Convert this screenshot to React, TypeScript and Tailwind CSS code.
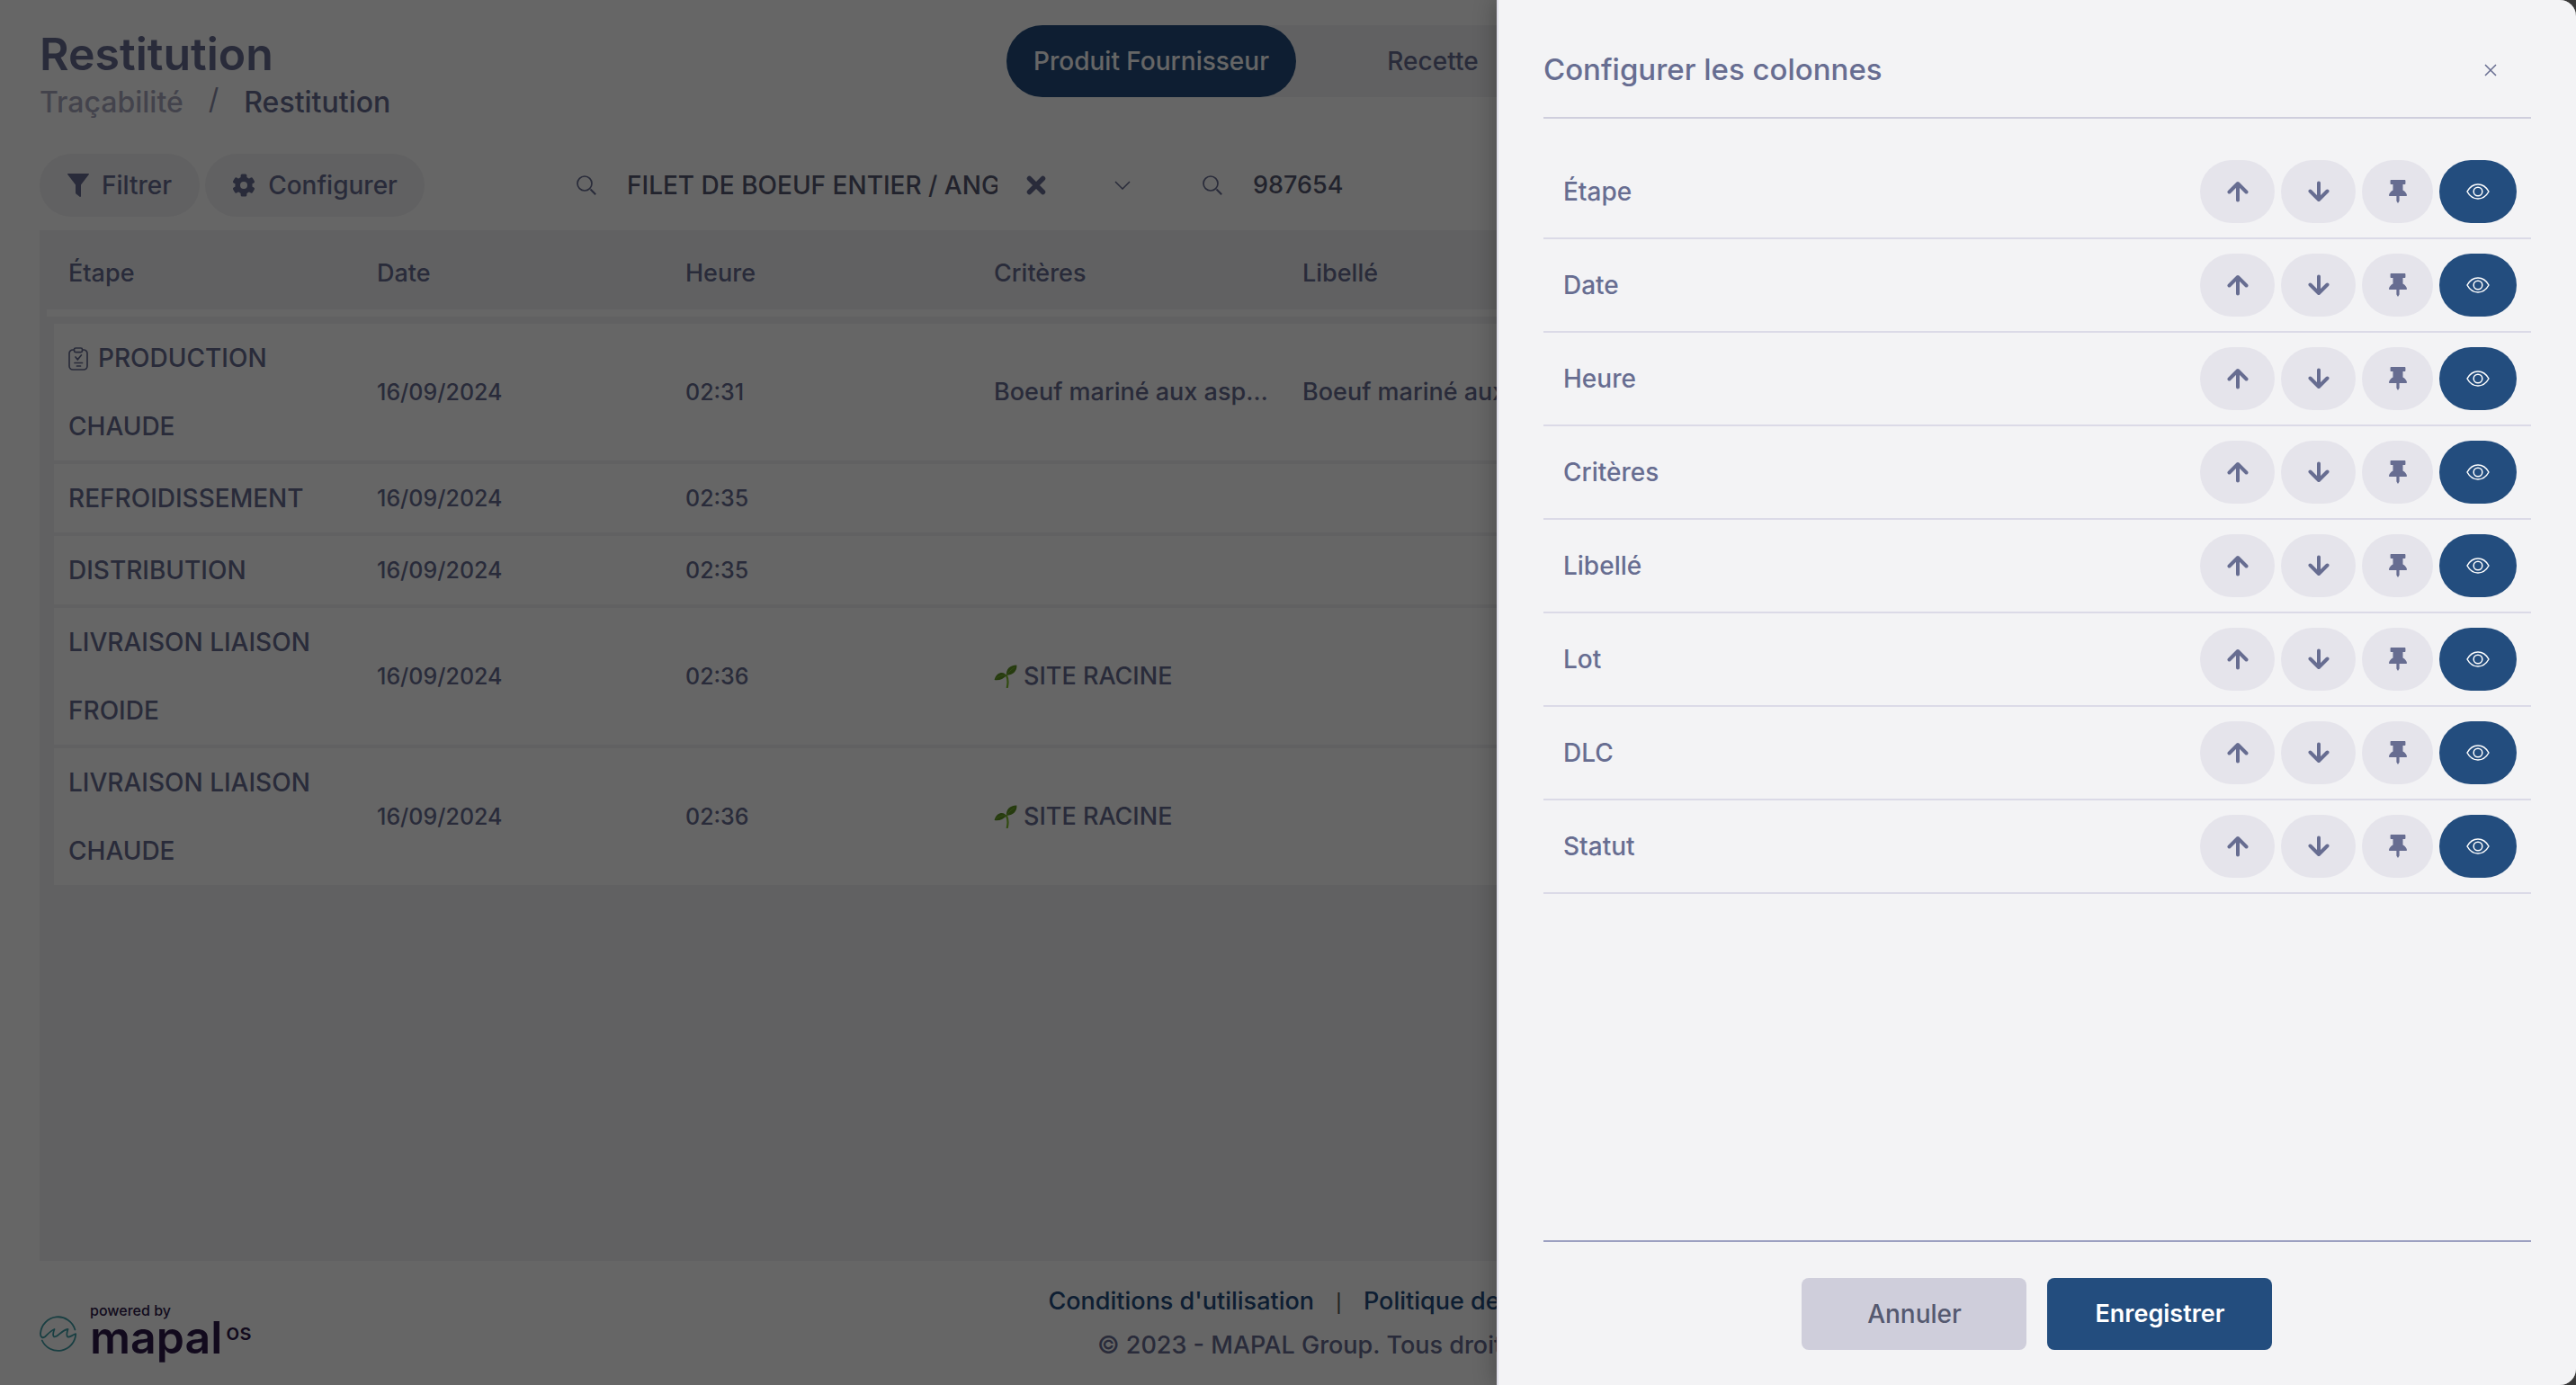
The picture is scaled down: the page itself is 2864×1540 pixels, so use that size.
import { useState } from 'react';
import type { ReactNode } from 'react';

interface TraceRow {
    etape: string;
    date: string;
    heure: string;
    critere?: string;
    libelle?: string;
    hasClipboard?: boolean;
    isSite?: boolean;
}

const COLUMNS = ['Étape', 'Date', 'Heure', 'Critères', 'Libellé', 'Lot', 'DLC', 'Statut'];

const ROWS: TraceRow[] = [
    {
        etape: 'PRODUCTION CHAUDE',
        date: '16/09/2024',
        heure: '02:31',
        critere: 'Boeuf mariné aux asperges',
        libelle: 'Boeuf mariné aux asperges',
        hasClipboard: true,
    },
    { etape: 'REFROIDISSEMENT', date: '16/09/2024', heure: '02:35' },
    { etape: 'DISTRIBUTION', date: '16/09/2024', heure: '02:35' },
    { etape: 'LIVRAISON LIAISON FROIDE', date: '16/09/2024', heure: '02:36', critere: 'SITE RACINE', isSite: true },
    { etape: 'LIVRAISON LIAISON CHAUDE', date: '16/09/2024', heure: '02:36', critere: 'SITE RACINE', isSite: true },
];

function FunnelIcon() {
    return (
        <svg viewBox="0 0 24 26" className="h-[26px] w-6" fill="currentColor" aria-hidden="true">
            <path d="M.6 0h22.800c.6 0 .8.6.4 1.100L15 12.400V25c0 .8-.8 1.200-1.400.7l-3.800-2.900a2 2 0 0 1-.8-1.600v-8.800L.2 1.100C-.2.6 0 0 .6 0z" />
        </svg>
    );
}

function GearIcon() {
    return (
        <svg viewBox="0 0 26 26" className="h-[26px] w-[26px]" aria-hidden="true">
            <g fill="currentColor">
                <rect x="9.6" y="0.4" width="6.8" height="25.2" rx="1.6" />
                <rect x="9.6" y="0.4" width="6.8" height="25.2" rx="1.6" transform="rotate(60 13 13)" />
                <rect x="9.6" y="0.4" width="6.8" height="25.2" rx="1.6" transform="rotate(120 13 13)" />
                <circle cx="13" cy="13" r="9.6" />
            </g>
            <circle cx="13" cy="13" r="4" fill="#f3f3f5" />
        </svg>
    );
}

function SearchIcon() {
    return (
        <svg viewBox="0 0 22 22" className="h-[22px] w-[22px] shrink-0" fill="none" stroke="currentColor" strokeWidth="1.7" aria-hidden="true">
            <circle cx="9" cy="9" r="8" />
            <path d="M15.5 15.5 21.2 21.2" strokeWidth="2" />
        </svg>
    );
}

function ClipboardIcon() {
    return (
        <svg viewBox="0 0 22 26" className="mr-[11px] inline-block h-[26px] w-[22px] align-[-4px]" fill="none" stroke="currentColor" strokeWidth="1.7" strokeLinecap="round" aria-hidden="true">
            <path d="M6 3H5A4 4 0 0 0 1 7v14a4 4 0 0 0 4 4h12a4 4 0 0 0 4-4V7a4 4 0 0 0-4-4h-1" />
            <rect x="6.5" y="1" width="9" height="4.6" rx="1.6" />
            <path d="m8 11 2.3 2.8 4.2-5M7 17.5h8.5M9.5 21h4" />
        </svg>
    );
}

function SeedlingIcon() {
    return (
        <svg viewBox="0 0 26 26" className="mr-[7px] inline-block h-[26px] w-[26px] align-[-4px]" aria-hidden="true">
            <path d="M14 12c1.6 3.5 2 8 .8 13.2" fill="none" stroke="#7fbf2e" strokeWidth="2.2" strokeLinecap="round" />
            <path d="M14 12c-.8-6.5 3.5-11.5 11.4-11.4C26 7.5 21 11.6 14 12z" fill="#5f9427" />
            <path d="M13.8 12.4C12.4 7.6 3 7.2.6 17c5.4 1.2 10-1.6 13.2-4.6z" fill="#5f9427" />
            <path d="M14 12c2-3.5 5-6.5 9-9" fill="none" stroke="#7fb536" strokeWidth="1" />
            <path d="M13.5 12C9.5 11.2 5.5 12.6 2.5 15.5" fill="none" stroke="#7fb536" strokeWidth="1" />
        </svg>
    );
}

function ArrowIcon({ down = false }: { down?: boolean }) {
    return (
        <svg viewBox="0 0 24 24" className={down ? 'h-6 w-6 rotate-180' : 'h-6 w-6'} fill="none" stroke="currentColor" strokeWidth="4" strokeLinecap="round" strokeLinejoin="round" aria-hidden="true">
            <path d="M12 21.5V3.5M2.5 12.5 12 3l9.5 9.5" />
        </svg>
    );
}

function PinIcon() {
    return (
        <svg viewBox="0 0 20 26" className="h-[26px] w-5" fill="currentColor" aria-hidden="true">
            <path d="M2.6 0h14.8c.6 0 1 .4 1 1v3c0 .6-.4 1-1 1h-1.9v6.4c2.4 1.2 4.2 3.3 4.5 5.7 0 .6-.4 1-1 1h-7.4v5.5L10 26l-1.6-2.4v-5.5H1c-.6 0-1-.4-1-1 .3-2.4 2.1-4.500 4.5-5.7V5H2.600c-.6 0-1-.4-1-1V1c0-.6.4-1 1-1z" />
        </svg>
    );
}

function EyeIcon() {
    return (
        <svg viewBox="0 0 26 18" className="h-[18px] w-[26px]" fill="none" stroke="currentColor" strokeWidth="1.5" strokeLinejoin="round" aria-hidden="true">
            <path d="M1 9C4 3.6 8 1 13 1s9 2.600 12 8c-3 5.400-7 8-12 8S4 14.400 1 9z" />
            <circle cx="13" cy="9" r="4.8" />
        </svg>
    );
}

function MapalMark() {
    return (
        <svg viewBox="0 0 42 42" className="h-[42px] w-[42px]" fill="none" stroke="#3f9da6" strokeWidth="1.8" strokeLinecap="round" strokeLinejoin="round" aria-hidden="true">
            <path d="M39.4 16.5A19.6 19.6 0 0 0 1 20.5c-.3 4.5 2.6 6 5.5 3.5 3-3 6-6.5 10-8-1.2 3-2.4 6.8-.4 8.3 4 1 7.5-7 15.4-8.3-1 3-2.2 7-.2 8.4 2.2 1 4-1.5 8.9-3.2A19.6 19.6 0 0 1 2.8 28.5" />
        </svg>
    );
}

interface RoundButtonProps {
    label: string;
    className: string;
    onClick?: () => void;
    children: ReactNode;
}

function RoundButton({ label, className, onClick, children }: RoundButtonProps) {
    return (
        <button type="button" aria-label={label} onClick={onClick} className={`flex h-[70px] items-center justify-center rounded-full ${className}`}>
            {children}
        </button>
    );
}

function PageHeader() {
    return (
        <header className="grid grid-cols-[1fr_auto_1fr] items-start px-11 pt-7">
            <div>
                <h1 className="text-[50px] font-semibold leading-[64px]">Restitution</h1>
                <nav aria-label="Fil d'Ariane" className="flex text-[32px] leading-[44px]">
                    <a href="#tracabilite" className="text-[#a9a9bf]">Traçabilité</a>
                    <span className="px-7 font-normal leading-9 text-[#8b8da9]">/</span>
                    <span>Restitution</span>
                </nav>
            </div>
            <div className="flex h-20 rounded-full bg-[#f3f3f5]">
                <button type="button" className="w-[322px] rounded-full bg-[#234d7e] text-white">Produit Fournisseur</button>
                <button type="button" className="w-[304px] rounded-full">Recette</button>
            </div>
        </header>
    );
}

function Toolbar() {
    return (
        <div className="mt-[35px] flex h-[70px] items-center px-11">
            <div className="flex w-[597px] shrink-0 gap-1.5">
                <button type="button" className="flex h-[70px] items-center gap-3.5 rounded-full bg-[#f3f3f5] px-[31px]">
                    <FunnelIcon />
                    Filtrer
                </button>
                <button type="button" className="flex h-[70px] items-center gap-3.5 rounded-full bg-[#f3f3f5] px-[30px]">
                    <GearIcon />
                    Configurer
                </button>
            </div>
            <div className="flex items-center">
                <SearchIcon />
                <input
                    type="text"
                    aria-label="Produit"
                    defaultValue="FILET DE BOEUF ENTIER / ANGUS"
                    className="ml-[34px] w-[412px] bg-transparent text-[28px] text-[#555970] outline-none"
                />
                <button type="button" aria-label="Effacer" className="ml-8">
                    <svg viewBox="0 0 22 22" className="h-[22px] w-[22px]" stroke="currentColor" strokeWidth="5.5" strokeLinecap="round" aria-hidden="true">
                        <path d="M3.5 3.5 18.5 18.5M18.5 3.5 3.5 18.5" />
                    </svg>
                </button>
                <button type="button" aria-label="Ouvrir la liste" className="ml-[76px]">
                    <svg viewBox="0 0 18 10" className="h-2.5 w-[18px]" fill="none" stroke="currentColor" strokeWidth="1.5" aria-hidden="true">
                        <path d="M1 1l8 8 8-8" />
                    </svg>
                </button>
            </div>
            <div className="ml-20 flex items-center">
                <SearchIcon />
                <input
                    type="text"
                    aria-label="Lot"
                    defaultValue="987654"
                    className="ml-[34px] w-[412px] bg-transparent text-[27px] text-[#555970] outline-none"
                />
            </div>
        </div>
    );
}

function TraceTable() {
    return (
        <div className="mx-11 mt-[15px] flex-1 bg-[#f3f3f5] px-4 pt-2">
            <table className="w-full table-fixed">
                <thead>
                    <tr className="h-20">
                        {COLUMNS.map((column) => (
                            <th key={column} scope="col" className="px-4 text-left text-[27px] font-medium">
                                {column}
                            </th>
                        ))}
                    </tr>
                </thead>
                <tbody>
                    <tr aria-hidden="true">
                        <td colSpan={COLUMNS.length} className="p-0">
                            <div className="-mx-2 mb-2 h-2 bg-white" />
                        </td>
                    </tr>
                    {ROWS.map((row) => (
                        <tr key={row.etape} className="border-b-4 border-[#f3f3f5] bg-white leading-[76px]">
                            <td className="px-4 py-0">
                                {row.hasClipboard && <ClipboardIcon />}
                                {row.etape}
                            </td>
                            <td className="px-4 py-0 text-[25px]">{row.date}</td>
                            <td className="px-4 py-0 text-[25px]">{row.heure}</td>
                            <td className="truncate px-4 py-0 text-[27px]">
                                {row.isSite && <SeedlingIcon />}
                                {row.critere}
                            </td>
                            <td className="truncate px-4 py-0 text-[27px]">{row.libelle}</td>
                            <td />
                            <td />
                            <td />
                        </tr>
                    ))}
                </tbody>
            </table>
        </div>
    );
}

function PageFooter() {
    return (
        <footer className="flex items-center px-11 py-5">
            <div className="flex w-40 shrink-0 items-center gap-3.5 pt-2 whitespace-nowrap text-[#2d1a4a]">
                <div className="shrink-0 pt-4">
                    <MapalMark />
                </div>
                <div>
                    <p className="text-[16px] leading-6">powered by</p>
                    <p className="flex items-start leading-9">
                        <span className="text-[50px] font-semibold">mapal</span>
                        <span className="pl-1 text-[25px] leading-6">os</span>
                    </p>
                </div>
            </div>
            <div className="flex-1 text-center text-[27px] leading-[49px]">
                <p>
                    <a href="#conditions" className="text-[#234d7e]">Conditions d'utilisation</a>
                    <span className="px-6 text-[20px] leading-none text-[#555555]">|</span>
                    <a href="#confidentialite" className="text-[#234d7e]">Politique de confidentialité</a>
                </p>
                <p>© 2023 - MAPAL Group. Tous droits réservés</p>
            </div>
        </footer>
    );
}

function ColumnsDrawer() {
    const [columns, setColumns] = useState(COLUMNS);

    const move = (index: number, delta: number) => {
        const target = index + delta;
        if (target < 0 || target >= columns.length) return;
        const next = [...columns];
        [next[index], next[target]] = [next[target], next[index]];
        setColumns(next);
    };

    return (
        <aside
            role="dialog"
            aria-label="Configurer les colonnes"
            className="absolute inset-y-0 right-0 flex w-[41.9%] flex-col border-l-2 border-[#dedde8] bg-[#f3f3f5] px-[50px] shadow-[0_0_24px_rgba(0,0,0,0.3)]"
        >
            <div className="flex h-[132px] items-center justify-between border-b-2 border-[#cfcedd] pt-[26px] pr-[38px]">
                <h2 className="text-[33px] font-medium">Configurer les colonnes</h2>
                <button type="button" aria-label="Fermer">
                    <svg viewBox="0 0 14 14" className="h-3.5 w-3.5" stroke="currentColor" strokeWidth="1.5" aria-hidden="true">
                        <path d="M1 1l12 12M13 1 1 13" />
                    </svg>
                </button>
            </div>
            <ul className="flex-1 pt-[30px]">
                {columns.map((column, index) => (
                    <li key={column} className="flex h-[104px] items-center justify-between border-b-2 border-[#dbdae7] pr-4 pl-[22px]">
                        <span>{column}</span>
                        <div className="flex gap-[7px]">
                            <RoundButton label={`Monter ${column}`} onClick={() => move(index, -1)} className="w-[83px] bg-[#e5e4eb]">
                                <ArrowIcon />
                            </RoundButton>
                            <RoundButton label={`Descendre ${column}`} onClick={() => move(index, 1)} className="w-[83px] bg-[#e5e4eb]">
                                <ArrowIcon down />
                            </RoundButton>
                            <RoundButton label={`Épingler ${column}`} className="w-[79px] bg-[#e5e4eb]">
                                <PinIcon />
                            </RoundButton>
                            <RoundButton label={`Afficher ${column}`} className="w-[86px] bg-[#234d7e] text-white">
                                <EyeIcon />
                            </RoundButton>
                        </div>
                    </li>
                ))}
            </ul>
            <div className="flex h-[161px] justify-center gap-[23px] border-t-2 border-[#9ca0c1] pt-10">
                <button type="button" className="h-20 w-[250px] rounded-lg bg-[#cfcedb] text-[#555970]">Annuler</button>
                <button type="button" className="h-20 w-[250px] rounded-lg bg-[#234d7e] text-[27px] font-semibold text-white">Enregistrer</button>
            </div>
        </aside>
    );
}

export default function App() {
    return (
        <div className="bg-[#383838] font-['Inter','Noto_Sans',sans-serif] text-[28px] font-medium text-[#676d91]">
            <div className="relative h-screen overflow-hidden rounded-r-[18px] bg-white">
                <main className="flex h-full flex-col">
                    <PageHeader />
                    <Toolbar />
                    <TraceTable />
                    <PageFooter />
                </main>
                <div className="absolute inset-0 bg-black/60" />
                <ColumnsDrawer />
            </div>
        </div>
    );
}
